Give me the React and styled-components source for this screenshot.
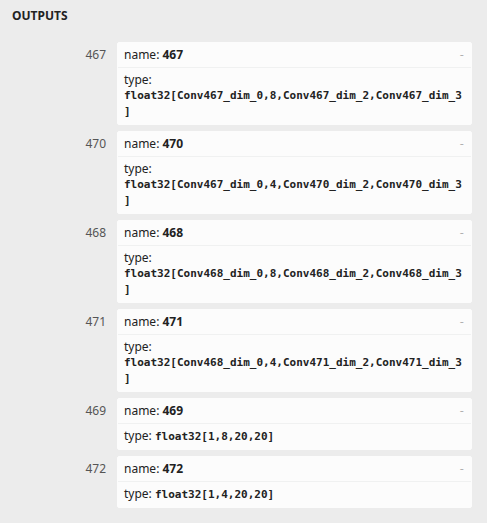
import React from "react";
import styled, { createGlobalStyle } from "styled-components";

const GlobalStyle = createGlobalStyle`
   html, body {
      margin: 0;
      padding: 0;
      background: #ececec;
   }
   body {
      font-family: "Segoe UI", "Noto Sans", "Open Sans", sans-serif;
      color: #222;
   }
`;

const outputs = [
   { id: "467", type: "float32[Conv467_dim_0,8,Conv467_dim_2,Conv467_dim_3]", long: true },
   { id: "470", type: "float32[Conv467_dim_0,4,Conv470_dim_2,Conv470_dim_3]", long: true },
   { id: "468", type: "float32[Conv468_dim_0,8,Conv468_dim_2,Conv468_dim_3]", long: true },
   { id: "471", type: "float32[Conv468_dim_0,4,Conv471_dim_2,Conv471_dim_3]", long: true },
   { id: "469", type: "float32[1,8,20,20]" },
   { id: "472", type: "float32[1,4,20,20]" },
];

const App = () => {
   return (
      <Sidebar>
         <GlobalStyle />
         <Header>Outputs</Header>
         <ItemList>
            {outputs.map((o) => (
               <Item key={o.id}>
                  <ItemName>{o.id}</ItemName>
                  <ItemValue>
                     <Line>
                        <Expander>-</Expander>
                        name: <b>{o.id}</b>
                     </Line>
                     <Line border>
                        {o.long ? (
                           <>
                              type:
                              <Code>{o.type.slice(0, -1)}</Code>
                              <Code>]</Code>
                           </>
                        ) : (
                           <>
                              type: <InlineCode>{o.type}</InlineCode>
                           </>
                        )}
                     </Line>
                  </ItemValue>
               </Item>
            ))}
         </ItemList>
      </Sidebar>
   );
};

const Sidebar = styled.div`
   width: 487px;
   min-height: 523px;
   padding: 8px 15px 0 12px;
   box-sizing: border-box;
`;

const Header = styled.div`
   font-weight: bold;
   font-size: 12px;
   line-height: 16px;
   text-transform: uppercase;
   margin-bottom: 18px;
`;

const ItemList = styled.div`
   display: flex;
   flex-direction: column;
   gap: 6px;
`;

const Item = styled.div`
   display: grid;
   grid-template-columns: 94px 1fr;
   column-gap: 11px;
   align-items: start;
`;

const ItemName = styled.div`
   color: #555;
   font-size: 12px;
   line-height: 16px;
   text-align: right;
   padding-top: 5px;
`;

const ItemValue = styled.div`
   background: #fcfcfc;
   border: 1px solid #fcfcfc;
   border-radius: 2px;
   font-size: 12px;
   line-height: 16px;
`;

const Line = styled.div`
   padding: 4px 6px;
   border-top: ${(p) => (p.border ? "1px solid rgba(27, 31, 35, 0.05)" : "none")};

   b {
      font-weight: bold;
      color: #222;
   }
`;

const Expander = styled.span`
   float: right;
   color: #aaa;
   font-family: "Liberation Mono", monospace;
   font-size: 11px;
`;

const Code = styled.div`
   font-family: Consolas, "DejaVu Sans Mono", "Liberation Mono", monospace;
   font-size: 11px;
   font-weight: bold;
   line-height: 16px;
`;

const InlineCode = styled.span`
   font-family: Consolas, "DejaVu Sans Mono", "Liberation Mono", monospace;
   font-size: 11px;
   font-weight: bold;
`;

export default App;
